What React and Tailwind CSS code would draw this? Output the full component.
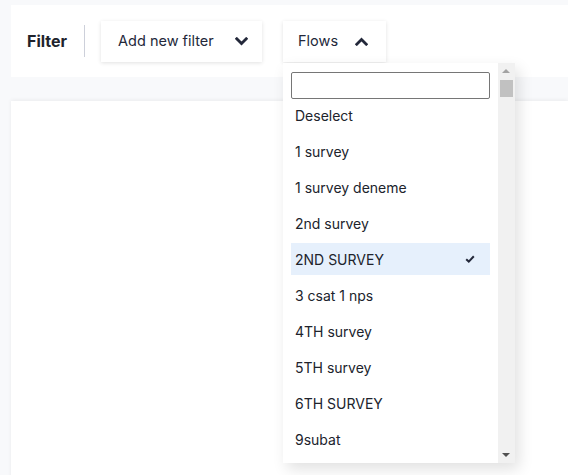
import { useState } from 'react';

const flows = [
  '1 survey',
  '1 survey deneme',
  '2nd survey',
  '2ND SURVEY',
  '3 csat 1 nps',
  '4TH survey',
  '5TH survey',
  '6TH SURVEY',
  '9subat',
];

const Chevron = ({ up }) => (
  <svg width="13" height="9" viewBox="0 0 13 9" className="text-[#23283a]">
    <polyline
      points={up ? '1.8,7.2 6.5,2.5 11.2,7.2' : '1.8,1.8 6.5,6.5 11.2,1.8'}
      fill="none"
      stroke="currentColor"
      strokeWidth="2.8"
      strokeLinecap="square"
    />
  </svg>
);

const App = () => {
  const [selected, setSelected] = useState('2ND SURVEY');
  const [query, setQuery] = useState('');

  return (
    <div
      className="relative h-[475px] w-[568px] overflow-hidden bg-[#f8f9fb] pt-[5px] pl-[11px]"
      style={{ fontFamily: 'Inter, "Noto Sans", sans-serif' }}
    >
      <div className="flex h-[72px] items-center bg-white pl-4">
        <span className="text-[16px] font-bold text-[#20232c]">Filter</span>
        <div className="ml-[17px] h-8 w-px bg-[#cdd0da]" />
        <button className="ml-4 flex h-[41px] w-[161px] items-center justify-between bg-white pl-[17px] pr-[14px] text-[14.5px] text-[#23283a] shadow-[0_1px_4px_rgba(0,0,0,0.12)]">
          <span>Add new filter</span>
          <Chevron />
        </button>
        <button className="ml-[21px] flex h-[41px] w-[103px] items-center justify-between bg-white pl-[15px] pr-[18px] text-[14.5px] text-[#23283a] shadow-[0_1px_4px_rgba(0,0,0,0.12)]">
          <span>Flows</span>
          <Chevron up />
        </button>
      </div>

      <div className="mt-6 h-[400px] bg-white shadow-[0_-1px_4px_rgba(0,0,0,0.06)]" />

      <div className="absolute left-[283px] top-[63px] flex h-[400px] w-[232px] bg-white shadow-[4px_6px_14px_rgba(0,0,0,0.12)]">
        <div className="flex-1 pl-2 pr-2 pt-[9px]">
          <input
            value={query}
            onChange={(e) => setQuery(e.target.value)}
            className="block h-[27px] w-[199px] rounded-[2px] border border-[#767676] bg-white px-1 text-[14px] outline-none"
          />
          <div className="flex flex-col gap-1">
            <div className="flex h-8 items-center px-1 text-[14px] text-[#20232c]">Deselect</div>
            {flows.map((f) => (
              <div
                key={f}
                onClick={() => setSelected(f)}
                className={`flex h-8 w-[199px] items-center justify-between px-1 text-[14px] text-[#20232c] ${
                  selected === f ? 'bg-[#e6f0fc]' : ''
                }`}
              >
                <span>{f}</span>
                {selected === f && (
                  <svg width="10" height="8" viewBox="0 0 10 8" className="mr-[11px]">
                    <polyline points="1.2,4.2 3.8,6.6 8.8,1.2" fill="none" stroke="#23283a" strokeWidth="2" />
                  </svg>
                )}
              </div>
            ))}
          </div>
        </div>
        <div className="relative w-[17px] bg-[#f1f1f1]">
          <div className="absolute left-[4px] top-[6px] h-0 w-0 border-x-[4px] border-b-[4px] border-x-transparent border-b-[#a3a3a3]" />
          <div className="absolute left-[2px] top-[17px] h-[17px] w-[13px] bg-[#c1c1c1]" />
          <div className="absolute bottom-[6px] left-[4px] h-0 w-0 border-x-[4px] border-t-[4px] border-x-transparent border-t-[#505050]" />
        </div>
      </div>
    </div>
  );
};

export default App;
